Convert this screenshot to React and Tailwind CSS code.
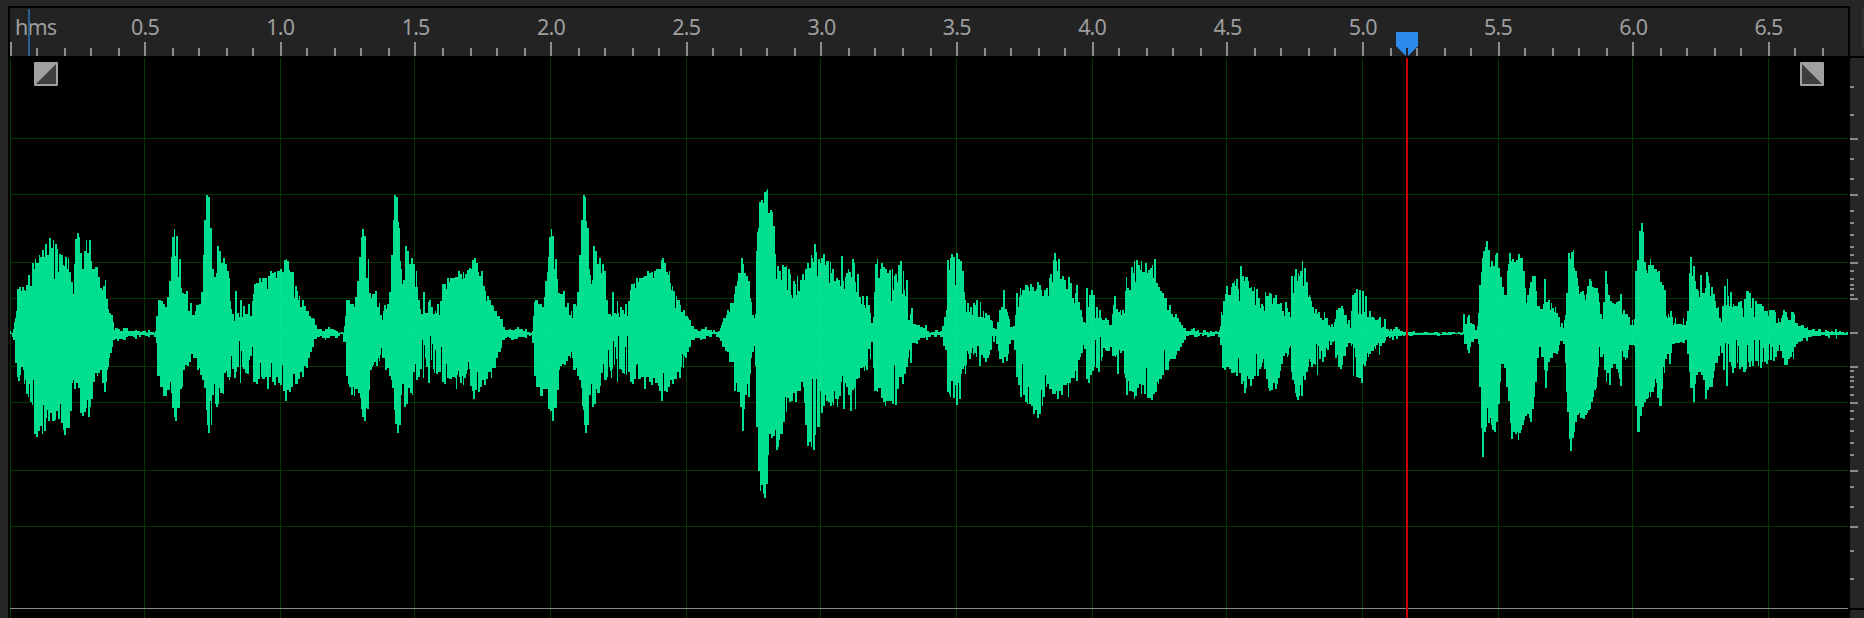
import React from "react";

// Outline of the clip, in thirds of a pixel. Each segment lists "x y" steps
// for the upper and lower envelope, relative to its own origin.
const SEGMENTS = [
  {
    x: 0,
    y: 540,
    top: "30 454 33 460 37 460 39 448 42 427 45 413 48 392 51 328 57 322 63 333 66 320 72 330 75 334 78 316 84 286 90 317 96 250 102 268 105 238 108 249 117 226 120 232 126 210 132 232 135 193 141 224 147 175 153 203 159 181 162 298 165 193 171 206 174 275 177 222 183 225 189 256 192 258 195 230 201 268 204 235 207 276 213 306 219 342 222 252 225 178 231 159 237 172 240 219 246 266 252 214 258 181 261 218 267 181 273 243 276 267 285 262 294 290 300 323 306 330 309 318 315 300 318 358 324 388 327 400 333 405 339 425 342 449 345 443 354 446 360 452 369 443 384 453 396 454 405 451 411 454 420 455 426 452 438 458 444 449 450 456 462 460 465 452 468 408 474 361 483 364 489 373 495 382 501 352 507 302 513 232 516 171 522 148 525 228 528 169 534 292 537 236 543 324 546 339 552 343 558 334 564 393 570 370 576 405 585 393 588 375 597 373 603 337 609 224 612 119 618 46 624 52 630 145 636 266 642 292 648 280 651 197 657 214 663 250 669 235 675 252 681 272 687 294 690 362 693 386 696 402 702 424 705 334 711 400 717 411 720 361 726 410 729 379 735 402 744 373 750 409 756 363 759 342 762 312 768 308 777 293 783 305 786 293 801 326 804 287 810 272 816 280 822 276 828 293 831 273 840 268 846 276 852 240 858 236 861 242 867 271 870 276 882 355 885 319 891 334 894 361 897 347 900 380 906 361 912 377 918 393 927 408 933 415 942 418 945 436 951 448 960 446 966 452 975 448 984 441",
    bottom: "30 462 36 470 39 480 45 549 51 591 54 603 60 586 63 560 69 571 72 611 75 599 78 643 84 651 87 612 90 665 96 674 99 600 102 763 108 772 114 752 120 737 126 763 129 675 132 752 138 713 141 690 144 724 150 700 156 724 165 720 168 692 174 716 180 672 183 730 189 751 192 764 198 745 210 692 216 610 219 601 222 627 228 609 234 624 240 700 246 709 252 695 258 685 261 660 264 711 270 682 273 657 279 607 285 580 291 588 294 580 300 570 306 608 312 635 318 605 321 571 324 560 327 533 330 518 336 501 339 480 345 477 351 484 357 476 369 480 378 472 384 469 399 470 405 477 411 466 417 472 423 465 435 469 444 471 450 466 462 470 468 488 471 589 480 621 489 647 501 629 510 606 513 640 516 685 522 712 525 724 531 685 540 628 546 620 549 571 555 556 561 557 567 546 573 523 579 534 591 571 597 563 600 586 606 601 612 625 618 689 621 734 624 758 630 664 633 735 636 646 642 612 645 671 648 682 654 671 657 625 660 640 669 643 672 580 678 572 681 590 687 600 690 590 693 527 696 566 702 594 708 577 711 560 717 483 720 608 723 514 726 561 729 567 735 579 741 583 747 541 750 527 756 501 759 605 768 613 774 598 780 548 783 590 786 597 795 592 801 627 807 590 813 550 816 606 822 616 828 590 834 608 840 616 846 555 849 634 855 662 861 631 867 636 873 622 879 583 885 612 894 598 900 577 906 592 912 557 918 563 924 534 930 516 936 501 942 478 951 472 960 469 966 474 975 480 978 475",
  },
  {
    x: 960,
    y: 540,
    top: "30 448 42 450 48 454 54 458 63 455 69 458 72 437 75 408 78 361 90 371 102 381 105 352 111 302 117 232 123 171 126 148 132 169 138 293 144 236 147 339 153 355 156 342 165 334 171 380 177 370 180 405 186 421 189 393 192 375 198 388 201 372 207 337 213 224 219 119 222 46 228 52 234 125 237 145 240 243 243 266 246 312 249 300 255 197 261 214 267 252 273 235 279 252 285 320 288 273 291 320 294 361 300 386 303 402 309 335 315 399 324 367 327 361 333 380 339 402 345 393 348 399 351 373 357 404 360 363 366 313 378 326 381 293 387 305 390 293 405 290 414 273 420 281 426 298 429 276 432 295 435 281 441 270 447 265 453 268 456 239 462 235 468 250 474 275 477 287 483 274 489 317 495 334 498 362 501 347 507 361 513 376 519 379 522 393 531 409 540 418 549 440 555 449 567 446 573 451 585 447 591 441 597 448 609 452 615 448 621 456 630 459 636 453 639 408 642 367 645 361 654 371 666 381 672 352 675 302 681 276 684 232 687 171 693 148 696 169 702 268 705 236 711 297 714 339 720 342 729 334 735 380 741 370 747 405 753 393 756 415 759 372 768 377 771 337 777 224 783 119 789 46 795 52 798 124 801 145 807 266 810 286 813 312 816 300 819 197 825 214 831 252 837 235 843 279 846 252 852 272 858 361 864 402 873 407 876 335 882 399 888 402 891 362 894 398 897 411 900 380 906 390 912 402 915 373 921 408 924 363 930 331 933 312 942 308 945 325 948 293 954 305 957 293 969 291 972 287 981 272 987 280",
    bottom: "30 469 39 468 45 473 54 467 60 463 69 485 78 589 84 611 87 621 93 646 99 620 102 647 105 628 114 640 120 653 123 686 126 712 132 724 138 683 141 687 147 629 150 571 156 561 159 555 162 546 168 557 174 535 177 543 180 524 183 504 186 534 195 571 201 563 207 587 213 601 216 625 222 689 225 733 231 758 237 734 243 645 246 612 252 682 258 671 264 625 270 640 276 644 279 577 285 553 288 600 294 590 300 566 306 479 309 594 312 495 315 535 318 560 324 608 330 468 333 540 336 491 339 567 342 578 345 511 348 583 354 576 360 577 363 501 366 606 372 613 378 553 381 593 387 598 396 592 405 594 408 627 411 586 414 574 417 590 420 608 426 587 429 615 432 593 438 582 441 570 444 546 447 567 450 617 456 634 459 656 465 631 471 577 474 636 480 620 486 600 492 614 498 597 504 576 513 594 516 564 528 534 534 516 543 504 546 479 555 475 561 470 567 475 573 480 582 477 594 472 609 470 615 473 621 465 627 469 633 464 636 488 642 589 648 621 660 647 669 628 684 686 690 694 696 724 702 685 711 629 717 571 720 558 726 552 732 556 738 544 744 527 750 534 753 516 756 535 759 571 768 564 771 587 777 601 783 625 786 678 789 690 792 734 795 758 801 735 807 646 813 612 816 682 822 671 828 628 831 640 840 618 843 578 849 553 852 600 861 590 864 511 867 560 870 573 873 594 876 566 879 483 882 554 885 501 888 537 891 605 894 469 897 567 903 571 906 578 912 583 915 501 918 585 921 468 924 577 930 606 936 612 942 598 948 555 951 553 954 597 963 592 972 627 978 590 987 607",
  },
  {
    x: 1920,
    y: 540,
    top: "33 276 39 293 42 272 48 267 54 267 63 240 66 235 72 250 78 277 84 286 87 274 90 310 93 329 96 318 99 334 105 383 108 347 111 361 120 376 123 397 129 390 135 407 144 415 147 421 153 438 162 446 171 449 174 452 183 447 195 441 201 449 210 451 216 456 219 450 225 456 234 453 240 445 243 435 246 427 249 414 258 405 261 391 267 395 270 370 282 343 285 318 291 304 294 279 303 235 309 252 312 279 318 288 324 304 330 354 333 365 336 404 342 413 345 402 348 214 351 157 354 143 357 65 363 60 369 69 372 37 378 32 381 27 384 99 390 91 396 97 399 139 405 222 408 297 411 259 417 273 423 300 426 256 432 261 438 258 441 330 444 268 450 283 453 346 456 354 459 304 465 312 468 345 471 288 474 333 480 300 486 282 492 300 495 267 501 249 507 263 513 225 516 235 519 247 522 193 528 216 531 288 534 237 540 249 543 234 549 222 555 255 558 243 567 309 570 247 573 280 576 267 582 304 588 293 594 300 600 318 603 229 609 303 612 328 615 291 618 278 624 267 627 276 633 292 636 238 642 249 645 306 648 335 651 283 657 351 663 372 666 347 672 375 675 385 678 348 684 375 690 400 693 430 699 412 702 335 705 253 711 238 714 295 720 267 723 250 729 262 735 268 741 280 747 269 753 362 756 267 759 330 762 288 765 283 771 306 774 255 780 244 786 342 789 272 792 329 795 348 798 300 804 420 810 402 813 384 819 432 828 436 840 440 849 444 855 436 861 452 867 458 873 455 885 451 894 455",
    bottom: "33 616 39 594 45 608 54 617 57 634 63 662 69 580 72 632 78 636 84 621 90 600 96 612 102 597 111 576 117 593 123 560 126 523 129 564 132 527 135 534 141 516 147 501 153 480 165 475 180 480 186 476 198 469 207 472 216 463 228 472 237 475 240 483 246 500 255 512 261 516 267 546 282 632 288 608 291 636 300 680 306 752 312 687 315 646 321 611 324 651 330 583 333 535 336 517 342 498 345 558 348 741 354 874 360 932 363 914 369 942 372 955 378 912 384 824 387 763 393 774 399 768 405 750 408 809 414 801 417 780 420 762 429 727 435 652 438 697 441 655 447 666 453 664 459 640 465 665 471 632 483 606 489 621 492 670 495 735 501 797 507 786 513 800 516 597 519 809 525 766 528 598 531 740 540 633 543 698 549 677 555 645 558 664 564 667 570 679 576 667 579 676 582 634 585 656 591 682 594 658 597 649 603 607 606 589 609 687 615 608 618 622 624 645 630 692 636 630 642 625 645 687 648 597 654 594 660 563 669 560 672 572 675 558 678 570 684 506 690 537 693 487 699 564 702 632 711 636 714 625 723 655 729 666 735 678 738 664 756 671 762 555 765 676 771 628 777 590 786 612 792 582 798 561 804 533 807 510 810 549 816 488 828 491 834 479 840 475 855 472 858 480 864 470 873 466 882 470 891 464",
  },
  {
    x: 2790,
    y: 690,
    top: "30 303 36 288 42 262 48 240 51 90 57 121 60 83 63 71 69 80 75 165 78 68 84 87 90 94 96 123 102 185 105 210 108 246 111 220 117 245 120 231 126 255 129 219 135 225 138 211 144 262 150 215 153 262 159 242 162 265 165 249 171 254 180 270 186 273 189 293 195 298 201 276 207 240 213 230 219 181 225 236 231 247 234 259 237 268 240 291 249 288 255 256 258 188 264 231 267 200 270 175 273 196 276 181 285 164 294 170 297 183 300 162 306 171 312 182 318 177 321 157 327 166 333 180 336 198 342 180 348 175 354 199 357 144 360 132 366 155 369 90 372 70 378 94 381 123 384 87 390 146 396 137 402 149 408 178 414 141 420 158 426 204 432 220 435 188 438 166 444 216 450 241 456 262 459 277 465 280 468 175 474 232 477 195 483 181 489 195 495 265 498 230 504 264 507 240 513 265 516 271 525 264 531 270 537 285 546 252 549 226 552 199 558 237 564 247 570 241 573 256 576 240 582 248 585 183 588 140 591 173 597 180 603 112 609 130 612 94 615 156 618 90 624 104 630 120 633 94 636 125 645 99 651 130 654 120 660 115 666 105 669 144 672 87 678 159 684 170 690 183 696 190 702 204 711 240 717 225 723 253 729 262 735 251 741 263 747 276 753 286 759 294 768 302 774 303 783 298 789 295 795 304 801 300 807 308 813 309 819 301 828 305 834 308 840 303 846 307 855 304 861 306 867 300 870 288 873 247 876 256 879 214 885 192 888 169 894 195",
    bottom: "30 321 39 348 45 360 51 486 57 493 60 501 63 454 69 504 75 465 78 525 84 459 87 507 93 431 96 418 102 408 105 433 108 405 111 363 114 371 117 388 123 370 126 355 129 375 132 368 138 380 141 349 147 407 153 376 159 383 165 395 171 385 177 376 180 360 186 318 189 337 195 319 198 342 204 363 207 387 216 398 222 382 228 393 234 373 237 342 243 330 252 360 258 442 264 465 270 502 276 402 279 495 285 515 291 523 294 470 297 521 303 527 309 552 315 540 321 563 327 552 333 480 336 528 339 501 345 435 348 471 351 462 357 478 366 492 378 484 381 508 387 484 393 495 399 465 411 460 414 501 417 458 423 444 435 423 438 454 444 390 450 382 453 370 459 346 462 357 468 447 474 460 480 436 486 423 492 411 495 330 498 414 504 426 510 321 513 394 516 382 519 354 525 360 528 364 534 362 540 350 546 378 555 382 558 374 561 433 567 360 570 368 576 363 582 432 585 443 588 494 594 454 597 482 606 486 612 507 615 497 621 474 627 462 633 492 636 464 642 492 648 413 651 503 663 509 669 493 675 486 681 457 684 462 687 446 696 434 702 361 705 421 717 393 720 388 732 388 738 375 741 363 750 350 756 338 762 330 768 318 777 316 786 314 792 321 804 317 810 312 816 318 822 314 831 320 840 317 849 318 855 312 864 321 870 345 876 413 882 419 888 411 897 416",
  },
  {
    x: 3600,
    y: 720,
    top: "90 164 93 141 96 129 102 123 105 137 108 118 114 147 117 184 120 78 126 109 132 123 135 111 144 123 147 144 153 140 156 153 162 141 165 195 168 148 174 175 180 204 183 191 189 199 192 214 195 156 198 167 207 160 213 163 216 191 219 174 225 165 231 192 240 188 246 212 252 229 255 186 261 204 264 216 270 230 273 109 279 159 282 109 285 88 291 124 294 99 297 108 300 94 306 64 309 137 312 84 318 127 324 172 327 165 330 171 333 184 336 200 342 220 345 208 351 222 354 217 360 234 366 240 372 217 375 235 384 255 390 260 393 252 399 260 402 245 405 236 408 210 414 204 423 199 429 208 432 226 441 252 444 240 450 264 453 213 456 166 462 160 468 147 474 222 477 150 483 222 486 154 492 217 495 168 501 232 507 214 513 232 522 235 525 240 531 241 534 237 537 231 543 264 546 261 552 237 558 268 567 274 570 268 576 274 579 268 585 262 594 266 600 274 609 276 621 275 630 277 639 274 645 279 666 278 672 276 684 280 702 275 714 279 720 281 726 276 738 279 744 276",
    bottom: "90 386 93 399 105 395 108 407 114 355 117 400 123 431 129 423 132 459 138 444 141 409 144 416 150 438 156 416 162 408 168 341 171 407 177 387 183 382 186 368 189 358 192 388 198 417 204 444 207 453 213 450 219 429 225 446 231 433 234 415 240 392 243 372 249 348 255 340 261 350 264 344 267 325 270 317 273 395 276 421 282 433 285 460 288 471 291 480 297 467 300 435 303 468 309 408 312 421 318 396 324 382 327 357 330 367 333 381 339 371 345 375 348 312 351 404 354 318 357 358 363 333 366 365 372 352 378 325 381 329 387 304 390 315 396 306 402 304 405 354 411 345 414 381 420 386 426 376 429 347 438 322 444 308 453 319 456 312 459 409 462 325 465 352 468 410 474 415 483 428 489 373 492 378 498 363 501 340 504 352 507 342 513 332 522 320 525 327 528 315 534 309 537 346 540 318 546 309 555 304 558 291 564 288 567 294 573 290 576 300 582 288 588 297 594 289 606 285 609 289 615 286 627 289 639 286 645 285 660 284 690 285 711 287 720 286 738 285",
  },
  {
    x: 4320,
    y: 630,
    top: "30 366 45 369 54 365 60 368 66 366 69 312 75 342 81 322 84 315 90 339 96 342 102 346 105 360 111 348 114 309 117 226 123 186 126 144 129 124 135 112 138 94 144 119 150 170 153 154 159 168 165 135 168 130 174 175 180 202 186 232 192 254 201 183 204 163 207 128 213 153 216 148 222 155 228 150 234 133 240 145 249 182 255 233 258 279 261 256 267 234 270 216 276 198 288 244 291 288 300 297 309 283 312 208 318 276 324 270 330 300 333 280 336 294 342 306 345 290 348 310 354 321 360 350 363 340 369 354 372 330 375 315 378 249 384 129 390 147 393 127 399 121 402 175 405 182 411 205 414 228 417 253 420 247 426 244 432 256 435 270 438 252 441 229 447 206 453 214 456 232 462 235 468 233 474 250 477 276 480 313 486 326 489 277 495 183 501 222 504 255 510 272 516 279 522 282 528 276 534 273 540 253 546 311 549 300 555 312 564 320 570 345 576 330 579 345 582 327 585 183 591 150 597 62 603 38 609 66 612 156 618 180 621 188 624 165 630 148 633 165 642 177 651 187 654 183 660 217 666 225 672 240 678 318 681 324 684 312 687 322 690 304 696 320 699 345 702 338 705 324 708 343 720 341 726 345 729 324 732 346 738 334 741 303 747 189 750 140 756 198 759 168 765 213 768 238 774 243 777 262 780 196 786 249 795 235 798 187 804 198 807 218 810 258 813 232 819 253 825 274 828 294 834 292 837 325 843 335 846 287 852 228 858 285 861 208 864 258 867 289 870 246 876 290 879 283 882 289 891 288 894 277 900 273 906 294 909 321 912 267 918 242 927 250 933 294 936 265 942 321 945 274 951 283 966 288 972 304 978 303 984 318 987 301 1005 306 1008 340 1014 325 1017 337 1023 324 1026 315 1029 300 1035 306 1041 322 1044 330 1053 307 1062 311 1065 340 1074 348 1083 346 1092 354 1101 351 1104 360 1116 356 1125 363 1134 358 1143 367 1155 361 1161 364 1167 366 1173 363 1179 367 1185 357 1191 366 1197 362 1203 366 1212 370 1218 366",
    bottom: "30 375 36 373 60 375 69 372 72 402 81 420 84 429 90 410 93 396 102 387 114 402 117 530 123 654 126 740 132 667 138 650 141 593 144 639 150 624 153 644 156 659 162 667 168 636 174 583 180 516 183 461 192 473 198 530 204 572 210 639 213 686 219 667 225 672 231 667 234 690 237 670 243 660 246 645 252 630 255 617 261 613 267 623 270 637 276 597 282 561 285 517 291 444 297 410 303 442 312 480 315 535 321 484 324 456 330 444 339 428 348 431 354 423 357 404 360 393 369 402 375 459 378 545 381 607 387 686 390 722 396 683 402 665 405 635 411 615 417 608 420 625 429 627 435 615 441 610 444 601 450 598 453 575 459 562 462 541 468 533 471 502 474 471 477 412 480 442 489 432 492 480 498 516 501 488 507 526 513 473 519 463 528 478 534 488 537 507 540 527 546 424 549 442 555 450 558 444 564 420 567 405 582 408 585 589 591 666 600 619 606 591 612 577 618 567 624 563 627 547 630 561 633 547 642 530 645 508 648 520 651 564 657 588 666 537 669 470 672 489 675 446 681 432 687 461 693 430 696 402 705 398 720 396 726 398 735 390 741 432 747 486 750 533 759 577 765 523 768 495 774 487 783 495 789 510 795 566 801 540 807 530 813 531 819 505 822 482 825 460 834 437 840 407 843 428 849 480 855 400 858 527 864 402 867 457 873 468 876 489 882 474 888 390 891 460 894 409 897 477 903 472 909 485 918 478 921 405 924 457 927 470 933 454 936 467 942 390 945 454 954 467 957 390 960 474 966 456 969 413 972 457 978 461 984 450 987 401 990 451 996 412 999 452 1005 440 1011 423 1017 405 1020 423 1026 445 1032 465 1044 446 1050 440 1056 427 1059 446 1062 410 1068 403 1074 397 1083 393 1089 383 1098 392 1104 380 1116 377 1128 379 1143 374 1155 377 1164 384 1170 374 1188 386 1191 374",
  },
];

const WAVE_END = 5544;

function envelope(side) {
  const points = [];
  for (const segment of SEGMENTS) {
    const values = segment[side].split(" ").map(Number);
    for (let i = 0; i < values.length; i += 2) {
      points.push([segment.x + values[i], segment.y + values[i + 1]]);
    }
  }
  return points;
}

function wavePath() {
  const upper = envelope("top");
  const lower = envelope("bottom");
  let d = `M${upper[0][0]} 1001`;
  upper.forEach(([x, y]) => {
    d += `H${x}V${y}`;
  });
  d += `H${WAVE_END}`;
  lower.reverse().forEach(([x, y]) => {
    d += `V${y}H${x}`;
  });
  return d + "Z";
}

const WAVE = wavePath();

// One tick per 0.1 s, snapped to even pixels; every fifth one is labelled.
const tickX = (n) => 2 * Math.floor(5 + 13.53 * n);
const TICKS = Array.from({ length: 68 }, (_, n) => n);
const MAJOR_TICKS = TICKS.filter((n) => n % 5 === 0);
const LABELS = ["0.5", "1.0", "1.5", "2.0", "2.5", "3.0", "3.5", "4.0", "4.5", "5.0", "5.5", "6.0", "6.5"];

const LEVEL_MAJOR = [138, 194, 262, 298, 332, 366, 402, 470, 526];
const LEVEL_MINOR = [
  86, 114, 158, 178, 210, 222, 234, 246, 254, 270, 278, 284, 288, 294, 370, 376, 380, 386, 394, 410, 418, 430, 442,
  454, 486, 506, 550, 578,
];

function TimeRuler() {
  return (
    <header className="flex h-12 flex-col justify-between bg-[#232323]">
      <div className="flex h-[34px] items-center pt-[3px] font-['Noto_Sans','Open_Sans',sans-serif] text-[21.5px] leading-[28px] tracking-[-0.8px] text-[#9e9e9e]">
        <span className="w-[67.4px] shrink-0 pl-[5px]">hms</span>
        {LABELS.map((label) => (
          <span key={label} className="w-[135.3px] shrink-0 text-center">
            {label}
          </span>
        ))}
      </div>
      <svg className="block h-[14px] w-full" viewBox="10 0 1838 14" shapeRendering="crispEdges">
        {TICKS.map((n) => (
          <rect key={n} x={tickX(n)} y={n % 5 ? 6 : 0} width="2" height={n % 5 ? 8 : 14} fill="#8e8e8e" />
        ))}
      </svg>
    </header>
  );
}

function Grid() {
  return (
    <>
      {MAJOR_TICKS.map((n) => (
        <rect key={n} x={tickX(n)} y="58" width="1" height="560" />
      ))}
      {LEVEL_MAJOR.map((y) => (
        <rect key={y} x="10" y={y} width="1838" height="1" />
      ))}
    </>
  );
}

function WaveView() {
  return (
    <svg className="block h-[560px] w-[1838px]" viewBox="10 58 1838 560" shapeRendering="crispEdges">
      <defs>
        <clipPath id="wave-clip">
          <path d={WAVE} transform="scale(0.3333333)" />
        </clipPath>
      </defs>
      <g fill="#003800">
        <Grid />
      </g>
      <rect x="10" y="608" width="1838" height="1" fill="#8a8a8a" />
      <path d={WAVE} transform="scale(0.3333333)" fill="#00df90" />
      <g fill="#06e492" clipPath="url(#wave-clip)">
        <Grid />
      </g>
    </svg>
  );
}

function FadeHandle({ className, points }) {
  return (
    <button className={"absolute top-[62px] size-6 rounded-[1px] bg-[#a0a0a0] " + className}>
      <svg className="block size-6" viewBox="0 0 24 24">
        <path d={points} fill="#3d3d3d" />
      </svg>
    </button>
  );
}

function LevelRuler() {
  return (
    <aside className="flex w-[14px] shrink-0 flex-col">
      <div className="flex h-14 items-center justify-end">
        <div className="h-[42px] w-[2px] rounded-l-sm bg-[#303030]" />
      </div>
      <div className="h-[2px] bg-black" />
      <svg className="block h-[550px] w-[14px]" viewBox="0 58 14 550" shapeRendering="crispEdges">
        {LEVEL_MAJOR.map((y) => (
          <rect key={y} y={y} width="8" height="2" fill="#8a8a8a" />
        ))}
        {LEVEL_MINOR.map((y) => (
          <rect key={y} y={y} width="4" height="2" fill="#8a8a8a" />
        ))}
      </svg>
      <div className="h-[2px] bg-black" />
    </aside>
  );
}

export default function App() {
  return (
    <div className="relative flex h-[618px] w-[1864px] overflow-hidden bg-[#262626] pl-2">
      <main className="mt-[6px] flex h-[612px] w-[1842px] shrink-0 flex-col bg-black px-[2px] pt-[2px]">
        <TimeRuler />
        <div className="mt-[2px]">
          <WaveView />
        </div>
      </main>
      <LevelRuler />
      <div className="absolute left-[28px] top-[9px] h-[47px] w-[2px] bg-[#2a5f96]" />
      <FadeHandle className="left-[34px]" points="M2 22 22 2V22Z" />
      <FadeHandle className="left-[1800px]" points="M2 2 22 22H2Z" />
      <div className="absolute bottom-0 left-[1406px] top-[58px] w-[2px] bg-[#c80000]" />
      <svg className="absolute left-[1396px] top-[32px] h-6 w-[22px]" viewBox="0 0 22 24">
        <path d="M0 0H22V14L12.5 23.5H9.5L0 14Z" fill="#2d8ceb" />
        <path d="M20 16h2v8h-2z" fill="#8e8e8e" />
        <path d="M10 16h2v8h-2z" fill="#1c2630" />
      </svg>
    </div>
  );
}
